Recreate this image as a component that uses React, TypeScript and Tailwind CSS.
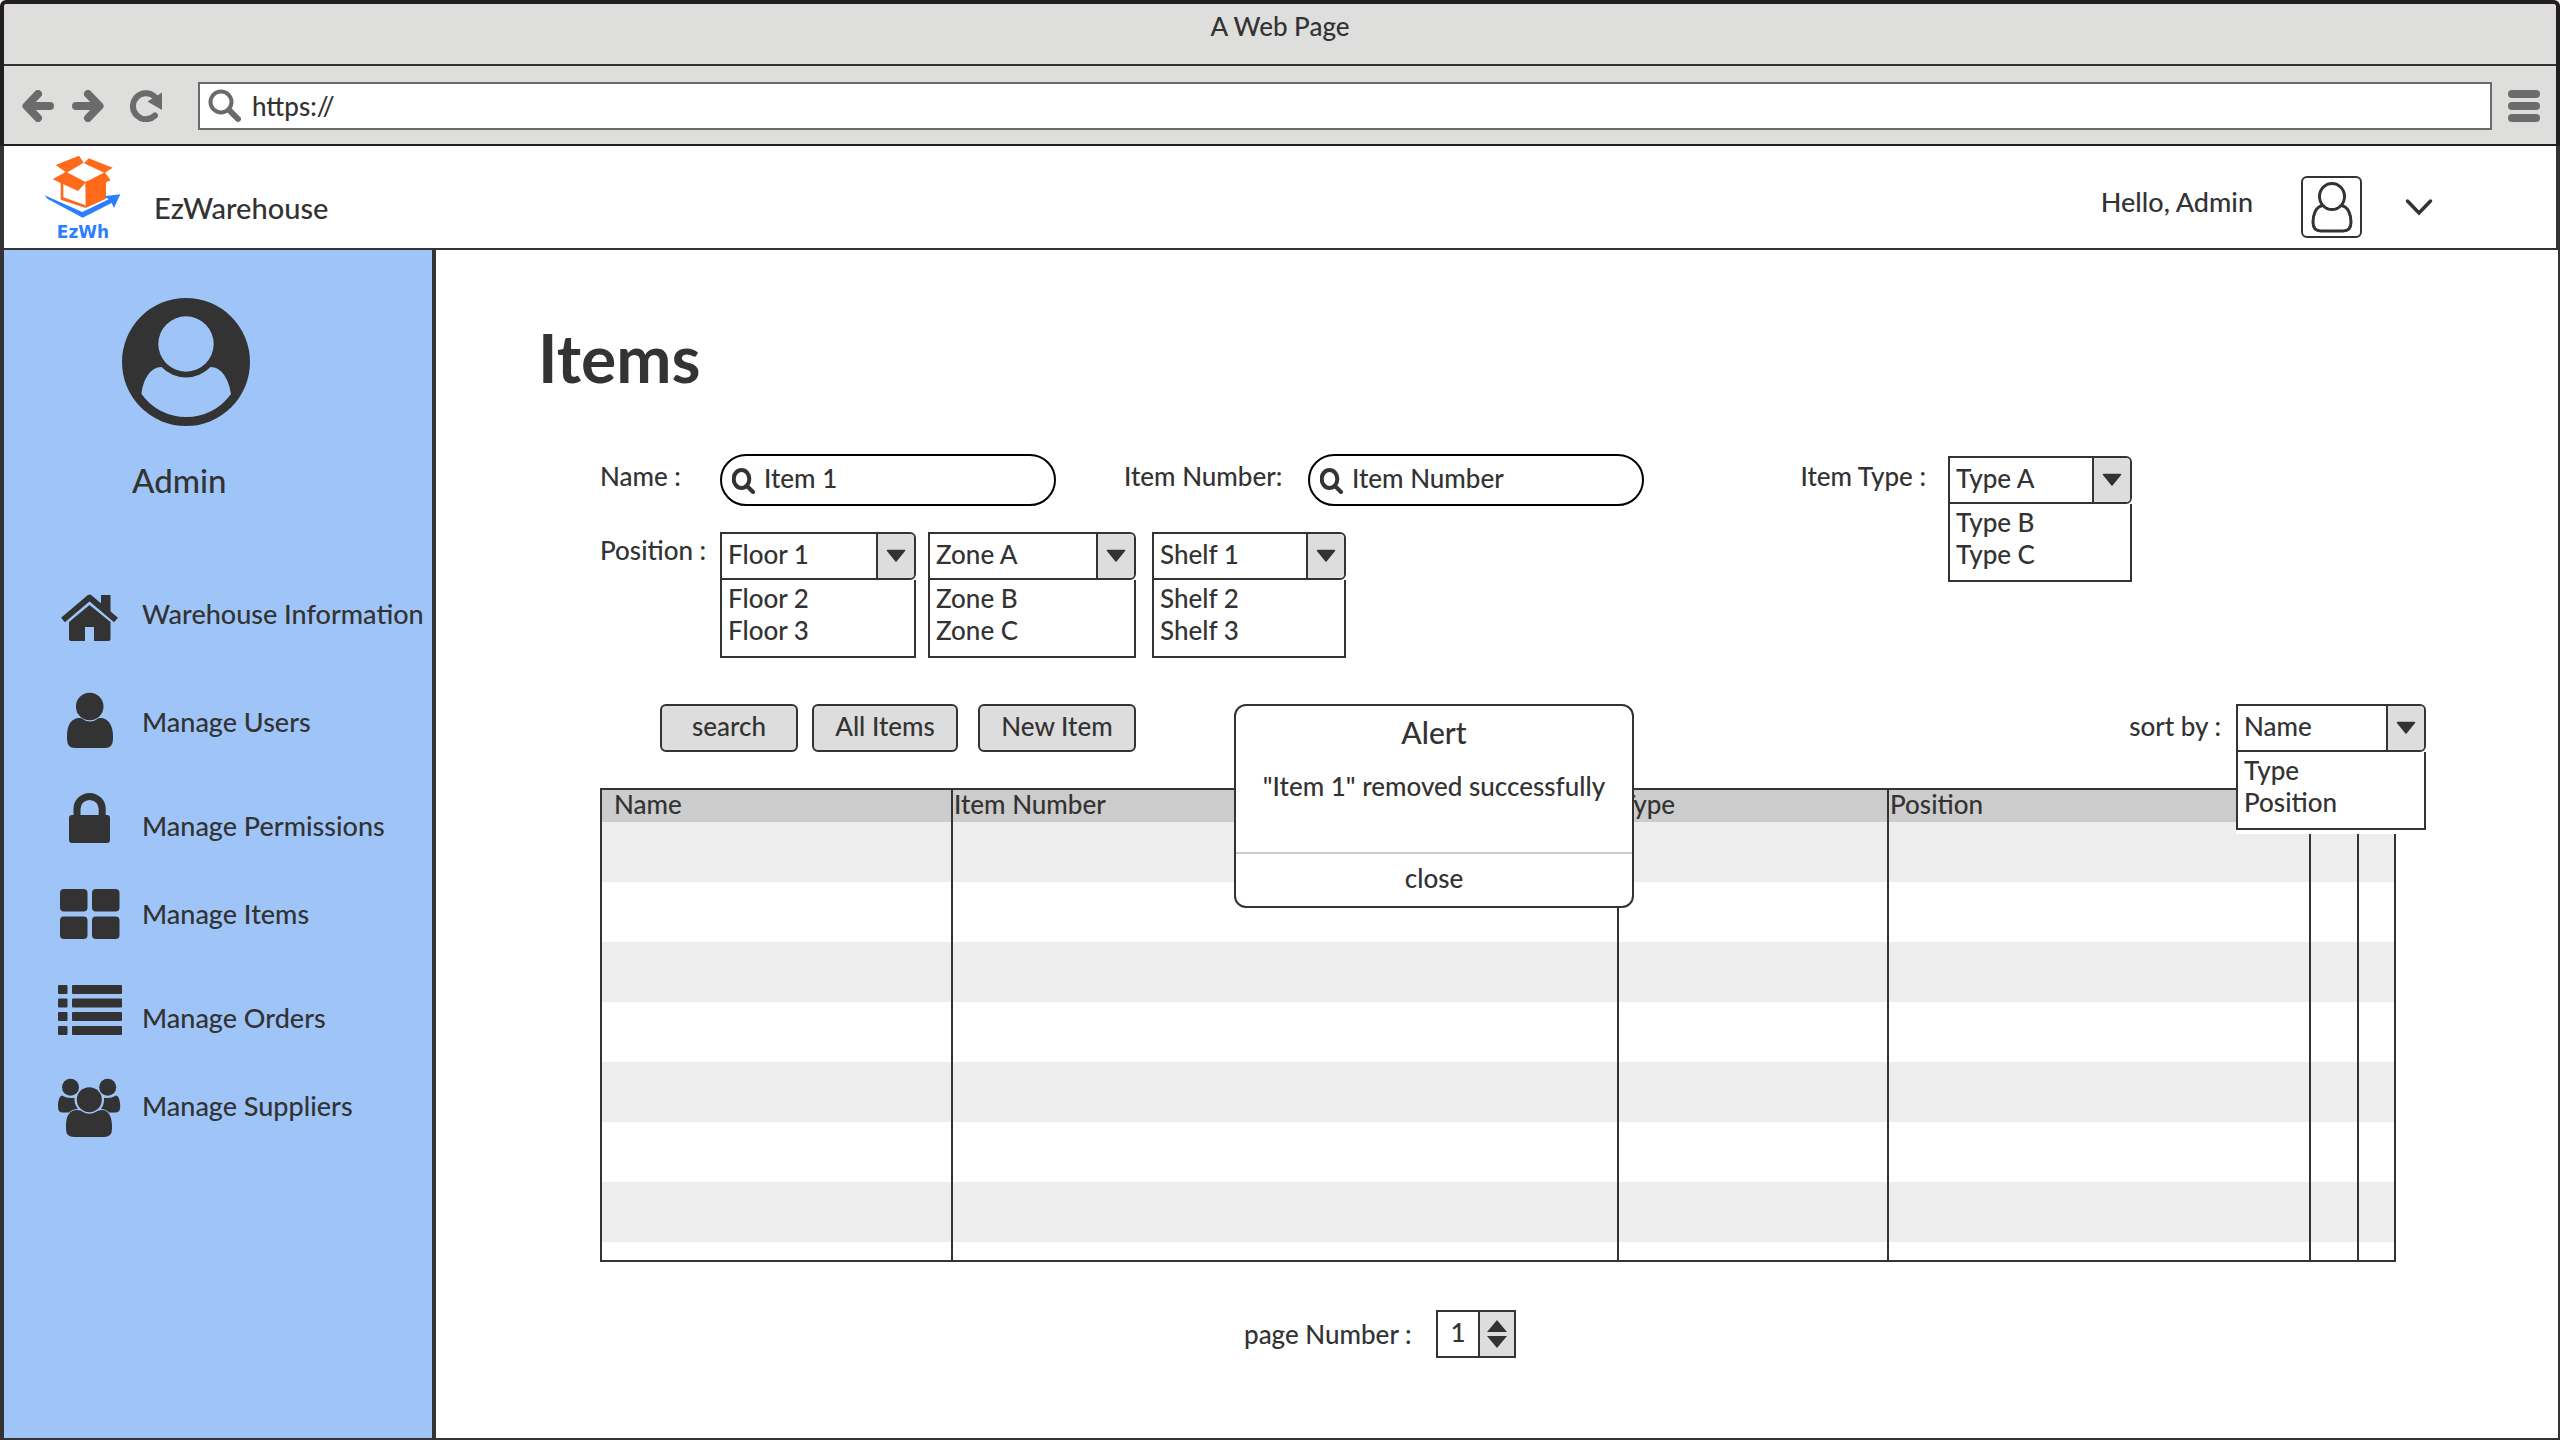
import React from "react";

type DropdownProps = {
  id: string;
  label: string;
  options: string[];
  className: string;
};

function Dropdown({ id, label, options, className }: DropdownProps) {
  const [selected, ...rest] = options;
  return (
    <div className={`bg-white ${className}`}>
      <div className="flex h-12 overflow-hidden rounded-r-md border-2 border-[#333]">
        <select
          id={id}
          aria-label={label}
          defaultValue={selected}
          className="w-full flex-1 appearance-none bg-white pb-1 pl-1.5 outline-none"
        >
          {options.map((option) => (
            <option key={option}>{option}</option>
          ))}
        </select>
        <span className="pointer-events-none flex w-[38px] items-center justify-center border-l-2 border-[#333] bg-[#ddd]">
          <svg viewBox="0 0 20 14" className="h-3.5 w-5" aria-hidden="true">
            <path d="M1.5 1.5H18.5L10 12Z" fill="#333" stroke="#333" strokeWidth="1.5" strokeLinejoin="round" />
          </svg>
        </span>
      </div>
      <ul className="h-[78px] border-2 border-t-0 border-[#333] bg-white pt-0.5 pl-1.5 leading-8">
        {rest.map((option) => (
          <li key={option}>{option}</li>
        ))}
      </ul>
    </div>
  );
}

function SearchField({ id, value, placeholder }: { id: string; value?: string; placeholder?: string }) {
  return (
    <div className="flex h-[52px] w-[336px] items-center rounded-[26px] border-2 border-black bg-white pl-2.5">
      <svg viewBox="0 0 24 26" className="mt-0.5 h-[26px] w-6 shrink-0" fill="none" stroke="#333" aria-hidden="true">
        <ellipse cx="9.5" cy="11" rx="7.8" ry="9" strokeWidth="4" />
        <path d="M15.5 18.5L21 24" strokeWidth="4" strokeLinecap="round" />
      </svg>
      <input
        id={id}
        defaultValue={value}
        placeholder={placeholder}
        className="h-full min-w-0 flex-1 bg-transparent pb-1 pl-2 outline-none placeholder:text-[#333] placeholder:opacity-100"
      />
    </div>
  );
}

function Logo() {
  return (
    <div className="relative h-[94px] w-[90px]">
      <svg viewBox="0 0 270 282" className="h-full w-full" aria-hidden="true">
        <g fill="#ff6a1a">
          <path d="M47 45L117 17L131 38L80 68Z" />
          <path d="M132 40L146 25L218 53L194 69Z" />
          <path d="M78 65L38 88L114 123L138 97Z" />
          <path d="M136 97L194 67L212 91L156 114Z" />
          <path d="M136 95L198 82V146L137 174Z" />
          <path d="M62 96V149L137 174V166L70 142V98Z" />
        </g>
        <path d="M84 68L131 45L186 68L138 92Z" fill="#fff" />
        <path
          d="M14 136L127 186L206 148L192 139L241 133L222 174L215 159L128 203L22 146Z"
          fill="#2b7fff"
        />
      </svg>
      <span className="absolute inset-x-0 bottom-0 pr-1 text-center font-['DejaVu_Sans'] text-[17px] leading-6 font-bold text-[#2b7fff]">
        EzWh
      </span>
    </div>
  );
}

const navItems = [
  {
    label: "Warehouse Information",
    gap: "",
    icon: (
      <>
        <path d="M45 17H54.5V38L45 30Z" />
        <path d="M7 42L33.5 19.5L60 42" fill="none" stroke="#333" strokeWidth="6" strokeLinejoin="round" />
        <path d="M33.5 27L54.5 44V61Q54.5 63 52.5 63H38V49H29V63H15Q13 63 13 61V44Z" />
      </>
    ),
  },
  {
    label: "Manage Users",
    gap: "mt-9",
    icon: (
      <>
        <circle cx="33.7" cy="20.5" r="13.8" />
        <path d="M11 50C11 37 17 31 25 32Q34 39 43 32C51 31 57 38 57 50V53Q57 62 49 62H19Q11 62 11 53Z" />
      </>
    ),
  },
  {
    label: "Manage Permissions",
    gap: "mt-8",
    icon: (
      <>
        <rect x="13" y="25" width="41" height="28" rx="3" />
        <path d="M21 27V19a12.6 12.6 0 0 1 25.2 0V27" fill="none" stroke="#333" strokeWidth="7" />
      </>
    ),
  },
  {
    label: "Manage Items",
    gap: "mt-4",
    icon: (
      <>
        <rect x="4" y="11" width="27.5" height="22.5" rx="4" />
        <rect x="36" y="11" width="27.5" height="22.5" rx="4" />
        <rect x="4" y="38.5" width="27.5" height="22.5" rx="4" />
        <rect x="36" y="38.5" width="27.5" height="22.5" rx="4" />
      </>
    ),
  },
  {
    label: "Manage Orders",
    gap: "mt-8",
    icon: (
      <>
        {[3, 16.5, 30, 44].map((y) => (
          <g key={y}>
            <rect x="2" y={y} width="9.5" height="9" rx="1" />
            <rect x="16" y={y} width="50" height="9" rx="1" />
          </g>
        ))}
      </>
    ),
  },
  {
    label: "Manage Suppliers",
    gap: "mt-4",
    icon: (
      <>
        <circle cx="14.5" cy="17.3" r="8.5" />
        <circle cx="51.7" cy="17.3" r="8.5" />
        <path d="M2 37C2 29 4 26 6 25.5Q12 29 18.5 27.7Q18 34 22 39Q16 39 13 42.5H6Q2 42 2 37Z" />
        <path d="M64.2 37C64.2 29 62.2 26 60.2 25.5Q54 29 48 27.7Q48.5 34 45 39Q50 39 53 42.5H60Q64.2 42 64.2 37Z" />
        <circle cx="33.3" cy="29.7" r="12.5" />
        <path d="M10 56C10 45 14 40 21 40Q25 40 26 41.5Q33.5 46 40.5 41.5Q42 40 46 40C52 40 56 46 56 56V59Q56 67 48 67H18Q10 67 10 59Z" />
      </>
    ),
  },
];

const columns = [
  { title: "Name", width: "w-[350px]", pad: "pl-3" },
  { title: "Item Number", width: "w-[666px]", pad: "pl-px" },
  { title: "Type", width: "w-[270px]", pad: "pl-px" },
  { title: "Position", width: "w-[422px]", pad: "pl-px" },
  { title: "", width: "w-12", pad: "" },
  { title: "", width: "", pad: "" },
];

const actionButton = "h-12 rounded-md border-2 border-[#333] bg-[#ddd] pb-1 text-center";

export default function App() {
  return (
    <div className="flex min-h-screen flex-col border-b-2 border-[#333] bg-white font-['Lato',sans-serif] text-[26px] leading-8 font-medium text-[#333]">
      <div className="rounded-t-md border-4 border-b-0 border-[#231f20] bg-[#dededd]">
        <div className="flex h-[62px] items-center justify-center border-b-2 border-[#333] pb-4">A Web Page</div>
        <div className="flex h-20 items-center gap-4 border-b-2 border-[#231f20] pt-0.5 pr-4 pl-[18px]">
          <div className="flex items-center gap-[18px]">
            <button aria-label="Back">
              <svg viewBox="0 0 32 32" className="size-8" fill="none" stroke="#6b6b6b" strokeWidth="8" strokeLinecap="round" strokeLinejoin="round">
                <path d="M16 4L4.5 16L16 28M6 16H28" />
              </svg>
            </button>
            <button aria-label="Forward">
              <svg viewBox="0 0 32 32" className="size-8" fill="none" stroke="#6b6b6b" strokeWidth="8" strokeLinecap="round" strokeLinejoin="round">
                <path d="M16 4L27.5 16L16 28M26 16H4" />
              </svg>
            </button>
            <button aria-label="Reload" className="ml-2">
              <svg viewBox="0 0 32 32" className="size-8">
                <path d="M25 25.5A13 13 0 1 1 24 6" fill="none" stroke="#6b6b6b" strokeWidth="6" strokeLinecap="round" />
                <path d="M32 2.5V20L17.5 11.5Z" fill="#6b6b6b" />
              </svg>
            </button>
          </div>
          <div className="ml-5 flex h-12 flex-1 items-center border-2 border-[#6b6b6b] bg-white pl-2">
            <svg viewBox="0 0 34 34" className="size-[34px]" fill="none" stroke="#6b6b6b" aria-hidden="true">
              <circle cx="13" cy="13" r="10.5" strokeWidth="4" />
              <path d="M21 21L30 30" strokeWidth="6" strokeLinecap="round" />
            </svg>
            <input aria-label="Address" defaultValue="https://" className="h-full min-w-0 flex-1 bg-transparent pl-2.5 outline-none" />
          </div>
          <button aria-label="Menu" className="flex flex-col gap-1">
            <span className="h-2 w-8 rounded-full bg-[#6b6b6b]" />
            <span className="h-2 w-8 rounded-full bg-[#6b6b6b]" />
            <span className="h-2 w-8 rounded-full bg-[#6b6b6b]" />
          </button>
        </div>
      </div>

      <header className="flex h-[104px] items-start border-x-4 border-b-2 border-[#333] pr-[122px] pl-9">
        <div className="mt-1">
          <Logo />
        </div>
        <span className="mt-11 ml-6 text-[29px] leading-9">EzWarehouse</span>
        <span className="mt-[38px] ml-auto text-[27px] leading-9">Hello, Admin</span>
        <div className="mt-[30px] ml-12 flex h-[62px] w-[61px] items-center justify-center rounded-md border-2 border-[#333]">
          <svg viewBox="0 0 44 54" className="h-[54px] w-11" fill="none" stroke="#333" strokeWidth="3" aria-hidden="true">
            <ellipse cx="22" cy="16.5" rx="12.5" ry="13" />
            <path d="M12.5 25.5C5 27 3 36 3 42Q3 51 11 51H33Q41 51 41 42C41 36 39 27 31.5 25.5" />
          </svg>
        </div>
        <button aria-label="Account menu" className="mt-[52px] ml-[42px]">
          <svg viewBox="0 0 30 20" className="h-5 w-[30px]" fill="none" stroke="#333" strokeWidth="3.5" strokeLinecap="round">
            <path d="M3.5 3L15 15L26.5 3" />
          </svg>
        </button>
      </header>

      <div className="flex flex-1 border-r-2 border-l-4 border-[#333]">
        <aside className="w-[432px] shrink-0 border-r-4 border-[#333] bg-[#9fc5f8] pt-12">
          <svg viewBox="0 0 128 128" className="ml-[118px] size-32" aria-hidden="true">
            <circle cx="64" cy="64" r="64" fill="#333" />
            <circle cx="64" cy="46" r="27.7" fill="#9fc5f8" />
            <path
              d="M39.5 69A34 34 0 0 0 88.5 69C100 69 107 82 109 96A55 55 0 0 1 19.5 96C21 82 28 69 39.5 69Z"
              fill="#9fc5f8"
            />
          </svg>
          <div className="mt-[34px] ml-32 text-[33px] leading-10">Admin</div>
          <nav className="mt-[78px] ml-[52px] text-[27px]">
            <ul>
              {navItems.map((item) => (
                <li key={item.label} className={item.gap}>
                  <a href="#" className="flex h-[72px] items-center gap-[18px] whitespace-nowrap">
                    <svg viewBox="0 0 68 72" className="h-[72px] w-[68px]" fill="#333" aria-hidden="true">
                      {item.icon}
                    </svg>
                    {item.label}
                  </a>
                </li>
              ))}
            </ul>
          </nav>
        </aside>

        <main className="min-w-0 flex-1 pr-[132px] pl-[164px]">
          <h1 className="mt-[72px] -ml-[62px] text-[66px] leading-[72px] font-bold">Items</h1>

          <div className="mt-[60px] flex items-start">
            <div className="flex flex-col gap-[26px]">
              <div className="flex">
                <label htmlFor="name" className="w-[120px] leading-[44px]">
                  Name :
                </label>
                <SearchField id="name" value="Item 1" />
                <label htmlFor="number" className="ml-[68px] w-[184px] leading-[44px]">
                  Item Number:
                </label>
                <SearchField id="number" placeholder="Item Number" />
              </div>
              <div className="flex">
                <span className="w-[120px] leading-9">Position :</span>
                <Dropdown id="floor" label="Floor" options={["Floor 1", "Floor 2", "Floor 3"]} className="w-[196px]" />
                <Dropdown id="zone" label="Zone" options={["Zone A", "Zone B", "Zone C"]} className="ml-3 w-[208px]" />
                <Dropdown id="shelf" label="Shelf" options={["Shelf 1", "Shelf 2", "Shelf 3"]} className="ml-4 w-[194px]" />
              </div>
            </div>
            <div className="mr-[294px] ml-auto flex">
              <label htmlFor="type" className="mr-[22px] leading-[44px]">
                Item Type :
              </label>
              <Dropdown
                id="type"
                label="Item Type"
                options={["Type A", "Type B", "Type C"]}
                className="mt-0.5 w-[184px]"
              />
            </div>
          </div>

          <div className="relative mt-[46px]">
            <div className="flex h-12 items-start">
              <button className={`${actionButton} ml-[60px] w-[138px]`}>search</button>
              <button className={`${actionButton} ml-3.5 w-[146px]`}>All Items</button>
              <button className={`${actionButton} ml-5 w-[158px]`}>New Item</button>
              <label htmlFor="sort" className="ml-auto pr-[205px] leading-[44px]">
                sort by :
              </label>
            </div>

            <div className="mt-9 mr-[30px] border-2 border-[#333]">
              <table className="w-full table-fixed border-collapse">
                <thead>
                  <tr className="h-8 bg-[#ccc]">
                    {columns.map((column, index) => (
                      <th
                        key={index}
                        className={`h-8 border-r-2 border-[#333] p-0 text-left align-top leading-7 font-medium last:border-r-0 ${column.width} ${column.pad}`}
                      >
                        {column.title}
                      </th>
                    ))}
                  </tr>
                </thead>
                <tbody>
                  {[0, 1, 2, 3, 4, 5, 6].map((row) => (
                    <tr key={row} className="h-[60px] odd:bg-[#ededed]">
                      {columns.map((_, index) => (
                        <td key={index} className="border-r-2 border-[#333] last:border-r-0" />
                      ))}
                    </tr>
                  ))}
                  <tr className="h-[18px]">
                    {columns.map((_, index) => (
                      <td key={index} className="border-r-2 border-[#333] p-0 last:border-r-0" />
                    ))}
                  </tr>
                </tbody>
              </table>
            </div>

            <div className="absolute top-0 right-0 bg-white pb-1">
              <Dropdown id="sort" label="sort by" options={["Name", "Type", "Position"]} className="w-[190px]" />
            </div>

            <div
              role="alertdialog"
              aria-labelledby="alert-title"
              className="absolute top-0 left-[634px] w-[400px] rounded-xl border-2 border-[#333] bg-white text-center"
            >
              <h2 id="alert-title" className="text-[30px] leading-[52px]">
                Alert
              </h2>
              <p className="h-[94px] pt-3">"Item 1" removed successfully</p>
              <button className="h-[54px] w-full border-t-2 border-[#ccc] pb-1">close</button>
            </div>
          </div>

          <div className="mt-12 ml-[644px] flex">
            <label htmlFor="page" className="w-48 leading-[48px]">
              page Number :
            </label>
            <div className="flex h-12 border-2 border-[#333]">
              <input id="page" defaultValue="1" className="w-10 bg-white pb-1 text-center outline-none" />
              <div className="flex w-9 flex-col items-center justify-center gap-1 border-l-2 border-[#333] bg-[#ddd]">
                <button aria-label="Next page">
                  <svg viewBox="0 0 20 12" className="h-3 w-5">
                    <path d="M0 12H20L10 0Z" fill="#333" />
                  </svg>
                </button>
                <button aria-label="Previous page">
                  <svg viewBox="0 0 20 12" className="h-3 w-5">
                    <path d="M0 0H20L10 12Z" fill="#333" />
                  </svg>
                </button>
              </div>
            </div>
          </div>
        </main>
      </div>
    </div>
  );
}
